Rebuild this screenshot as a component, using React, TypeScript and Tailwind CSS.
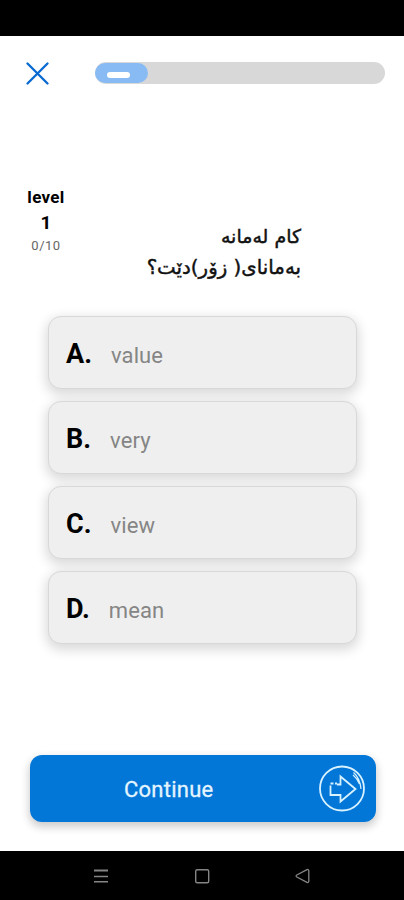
import React from "react";

const answers = [
  { letter: "A.", word: "value" },
  { letter: "B.", word: "very" },
  { letter: "C.", word: "view" },
  { letter: "D.", word: "mean" },
];

function Header() {
  return (
    <header className="flex h-[74px] items-center pl-[26px]">
      <svg width="23" height="23" viewBox="0 0 23 23" fill="none" stroke="#0869d1" strokeWidth="2.3" strokeLinecap="round">
        <path d="M1.5 1.5 21.5 21.5M21.5 1.5 1.5 21.5" />
      </svg>
      <div className="ml-[46px] h-[22px] w-[290px] rounded-full bg-[#d8d8d8] py-px">
        <div className="flex h-5 w-[53px] items-center rounded-full bg-[#88bbf3] pl-3">
          <div className="mt-[3px] h-[6px] w-[23px] rounded-[3px] bg-white" />
        </div>
      </div>
    </header>
  );
}

function Question() {
  return (
    <section className="flex h-[205px] justify-between pl-[20px] pr-[103px] pt-[75px]">
      <div className="flex w-[52px] flex-col items-center text-black">
        <span className="text-[17px] font-bold leading-[25px] tracking-[0.3px]">level</span>
        <span className="mt-px text-[19px] font-bold leading-6">1</span>
        <span className="text-[13px] leading-[21px] tracking-[0.5px] text-[#666]">0/10</span>
      </div>
      <div dir="rtl" className="mt-[36px] whitespace-nowrap font-['DejaVu_Sans',sans-serif] text-[19px] leading-[31px] text-[#111] [-webkit-text-stroke:0.45px_#111]">
        <p>کام لەمانە</p>
        <p className="text-[19.8px]">بەمانای( زۆر)دێت؟</p>
      </div>
    </section>
  );
}

function NavigationBar() {
  return (
    <nav className="flex h-[49px] items-center bg-black pl-[93px] text-[#858585]">
      <svg width="16" height="16" viewBox="0 0 16 16" stroke="currentColor" strokeWidth="1.4">
        <path d="M1 2.5h14" strokeWidth="2" />
        <path d="M1 8.5h14M1 13.7h14" />
      </svg>
      <svg className="ml-[85px]" width="16" height="16" viewBox="0 0 16 16" fill="none" stroke="currentColor" strokeWidth="1.4">
        <rect x="1.7" y="1.7" width="13" height="13" rx="1.5" />
      </svg>
      <svg className="ml-[85px]" width="16" height="16" viewBox="0 0 16 16" fill="none" stroke="currentColor" strokeWidth="1.3" strokeLinejoin="round">
        <path d="M12 1.6 1.8 7q-1.4 1 0 2L12 14.4q1.8.6 1.8-1.4V3q0-2-1.8-1.4Z" />
      </svg>
    </nav>
  );
}

export default function App() {
  return (
    <main className="flex h-[900px] w-[404px] flex-col overflow-hidden bg-white font-['Roboto',sans-serif]">
      <div className="h-9 shrink-0 bg-black" />
      <Header />
      <Question />
      <section className="flex flex-col gap-3 pl-12 pr-[47px] pt-px">
        {answers.map(({ letter, word }) => (
          <button
            key={letter}
            className="flex h-[73px] w-[309px] items-center rounded-[13px] border-[1.5px] border-[#d8d8d8] bg-[#efefef] pl-[17px] pt-[3px] text-left shadow-[0_4px_12px_2px_rgba(0,0,0,0.15)]"
          >
            <span className="text-[27px] font-bold text-black">{letter}</span>
            <span className="ml-[19px] mt-[3px] text-[22px] tracking-[0.1px] text-[#858585]">{word}</span>
          </button>
        ))}
      </section>
      <div className="mt-auto flex h-[96px] shrink-0 pl-[30px]">
        <button className="flex h-[67px] w-[346px] items-center rounded-[12px] bg-[#0277d8] pl-[94px] text-[22px] text-[#e4f5ff] shadow-[0_4px_8px_1px_rgba(0,0,0,0.2)]">
          <span className="pt-0.5 tracking-[0.25px] [-webkit-text-stroke:0.3px_#e4f5ff]">Continue</span>
          <svg className="ml-auto mr-[10px]" width="48" height="48" viewBox="0 0 48 48" fill="none" stroke="#d9f2ff" strokeWidth="1.8">
            <circle cx="24" cy="23.5" r="22" />
            <path d="M12.5 20.5v9.5h10v6.5L37.5 24 22.5 11.5v8h-3.5M12.5 18.5h3M17 18.5h2" />
            <path d="M35.5 7.5q6.5 5.5 7.5 16.5M35 10q4.5 3.5 6.5 9" strokeWidth="1.2" />
          </svg>
        </button>
      </div>
      <NavigationBar />
    </main>
  );
}
